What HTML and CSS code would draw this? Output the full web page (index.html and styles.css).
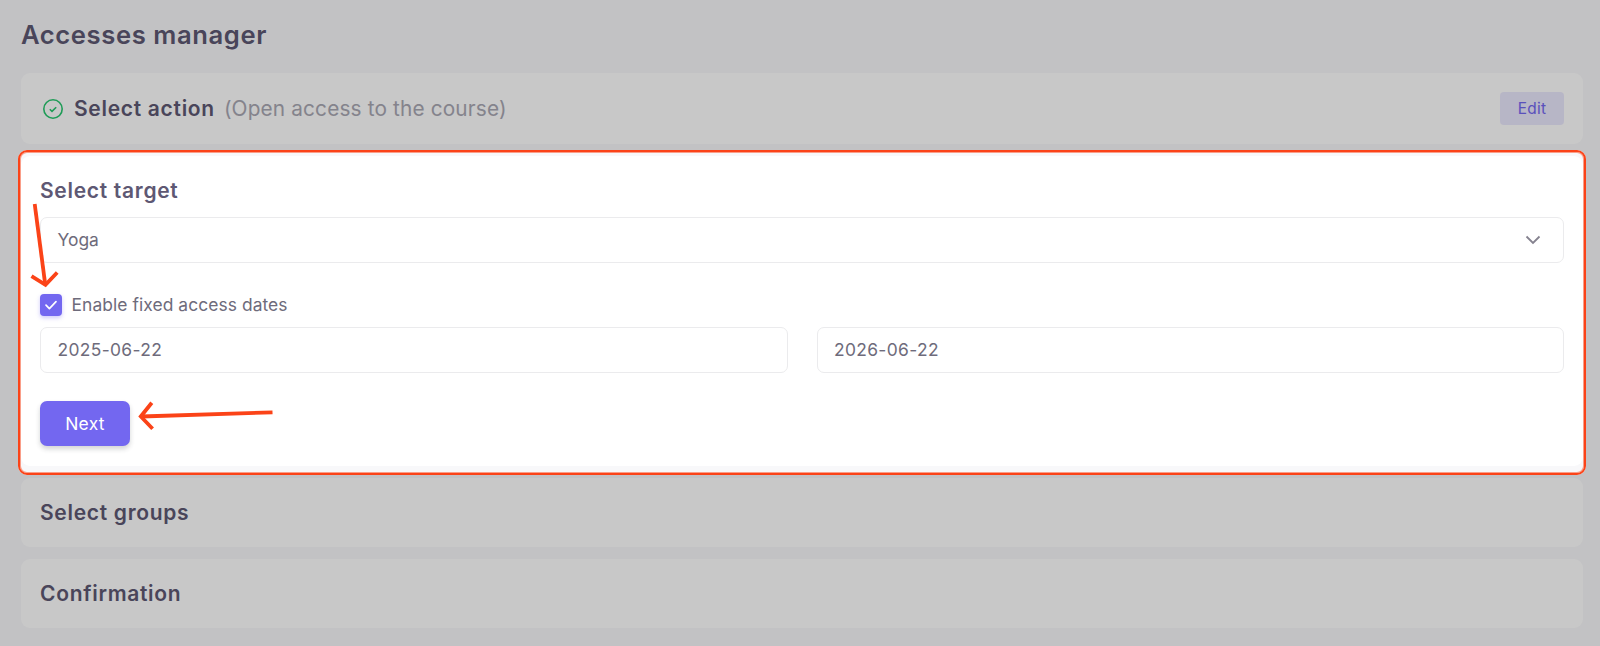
FILE: index.html
```html
<!DOCTYPE html>
<html lang="en">
<head>
  <meta charset="UTF-8">
  <meta name="viewport" content="width=device-width, initial-scale=1">
  <title>Accesses manager</title>
  <link rel="stylesheet" href="styles.css">
</head>
<body>
  <main class="page">
    <h1>Accesses manager</h1>

    <div class="steps">
      <section class="card card-done">
        <svg class="icon-done" width="22" height="22" viewBox="0 0 22 22">
          <circle cx="11" cy="11" r="9.2" />
          <path d="M7.8 11.2l2.2 2.2 4.2-4.2" />
        </svg>
        <h2>Select action</h2>
        <span class="summary">(Open access to the course)</span>
        <button class="btn-edit">Edit</button>
      </section>

      <section class="card card-target">
        <h2>Select target</h2>
        <div class="field select">
          <span>Yoga</span>
          <svg width="18" height="12" viewBox="0 0 18 12">
            <path d="M2.5 2.5L9 9l6.5-6.5" />
          </svg>
        </div>

        <label class="check-row">
          <span class="checkbox">
            <svg width="14" height="12" viewBox="0 0 14 12">
              <path d="M2 6.2l3.4 3.4L12 2.6" />
            </svg>
          </span>
          <span class="check-label">Enable fixed access dates</span>
        </label>

        <div class="dates">
          <div class="field"><span class="date">2025-06-22</span></div>
          <div class="field"><span class="date">2026-06-22</span></div>
        </div>

        <button class="btn-next">Next</button>
      </section>

      <section class="card card-closed">
        <h2>Select groups</h2>
      </section>

      <section class="card card-closed">
        <h2>Confirmation</h2>
      </section>
    </div>
  </main>

  <!-- spotlight and pointers above the form -->
  <div class="spotlight"></div>
  <svg class="arrows" width="1600" height="646" viewBox="0 0 1600 646">
    <path d="M34.7 204L45.3 285" />
    <path d="M31.5 276.2L45.5 284.8L57.2 272.5" />
    <path d="M272.5 412.3L141 416.5" />
    <path d="M151.8 402.8L140.8 416.5L152.6 428.8" />
  </svg>
</body>
</html>
```
FILE: styles.css
```css
:root {
  --bg: #f8f8fa;
  --card: #fff;
  --heading: #5e5873;
  --text: #6e6b7b;
  --primary: #7367f0;
  --mark: #fb4318;
}

* {
  box-sizing: border-box;
}

body {
  position: relative;
  margin: 0;
  height: 646px;
  overflow: hidden;
  background: var(--bg);
  color: var(--text);
  font-family: Inter, Roboto, sans-serif;
  font-size: 17.4px;
}

.page {
  padding: 19px 17px 0 21px;
}

h1, h2 {
  margin: 0;
  color: var(--heading);
  font-weight: 600;
  white-space: nowrap;
}

h1 {
  height: 54px;
  font-size: 25.6px;
  line-height: 31px;
  letter-spacing: 0.6px;
}

h2 {
  font-size: 21px;
  line-height: 26px;
  letter-spacing: 0.7px;
}

.steps {
  display: flex;
  flex-direction: column;
  gap: 12px;
}

.card {
  background: var(--card);
  border-radius: 9px;
  padding: 0 19px;
}

.card-done {
  display: flex;
  align-items: center;
  height: 71px;
}

.icon-done {
  margin: 0 10.5px 0 1.5px;
  fill: none;
  stroke: #28c76f;
  stroke-width: 1.6;
}

.summary {
  margin-left: 9px;
  color: #a9a8b3;
  font-size: 20.8px;
  letter-spacing: 0.15px;
}

button {
  border: none;
  font-family: inherit;
  cursor: pointer;
}

.btn-edit {
  width: 64px;
  height: 33px;
  margin-left: auto;
  padding: 0;
  border-radius: 4px;
  background: rgba(115, 103, 240, 0.15);
  color: var(--primary);
  font-size: 15.4px;
  letter-spacing: 0.3px;
}

.card-target {
  height: 310px;
  padding-top: 21.5px;
}

.field {
  display: flex;
  align-items: center;
  justify-content: space-between;
  height: 46px;
  padding: 0 16.5px;
  border: 1px solid #ebebed;
  border-radius: 7px;
}

.select {
  margin-top: 13px;
  padding-right: 21px;
}

.select svg {
  fill: none;
  stroke: #85828f;
  stroke-width: 1.8;
}

.check-row {
  display: flex;
  align-items: center;
  gap: 9.5px;
  height: 22px;
  margin-top: 31px;
}

.checkbox {
  display: flex;
  align-items: center;
  justify-content: center;
  width: 22px;
  height: 22px;
  border-radius: 4px;
  background: var(--primary);
  box-shadow: 0 2px 4px rgba(115, 103, 240, 0.35);
}

.checkbox svg {
  fill: none;
  stroke: #fff;
  stroke-width: 1.7;
  stroke-linecap: round;
  stroke-linejoin: round;
}

.check-label {
  letter-spacing: 0.08px;
}

.dates {
  display: grid;
  grid-template-columns: 1fr 1fr;
  gap: 29px;
  margin-top: 11px;
}

.date {
  letter-spacing: 0.35px;
}

.btn-next {
  display: block;
  width: 90px;
  height: 45px;
  margin-top: 28.5px;
  padding: 0;
  border-radius: 7px;
  background: var(--primary);
  box-shadow: 0 3px 5px rgba(34, 41, 47, 0.2);
  color: #fff;
  font-size: 17.4px;
  letter-spacing: 0.3px;
}

.card-closed {
  display: flex;
  align-items: center;
  height: 69px;
}

/* everything outside the box is dimmed by the huge shadow */
.spotlight {
  position: absolute;
  left: 18px;
  top: 150px;
  width: 1568px;
  height: 325px;
  border: 2px solid var(--mark);
  border-radius: 9px;
  box-shadow:
    inset 0 0 0 1px rgba(251, 67, 24, 0.5),
    0 0 0 1700px rgba(0, 0, 0, 0.215);
  pointer-events: none;
}

.arrows {
  position: absolute;
  left: 0;
  top: 0;
  fill: none;
  stroke: var(--mark);
  stroke-width: 3.8;
  pointer-events: none;
}
```
